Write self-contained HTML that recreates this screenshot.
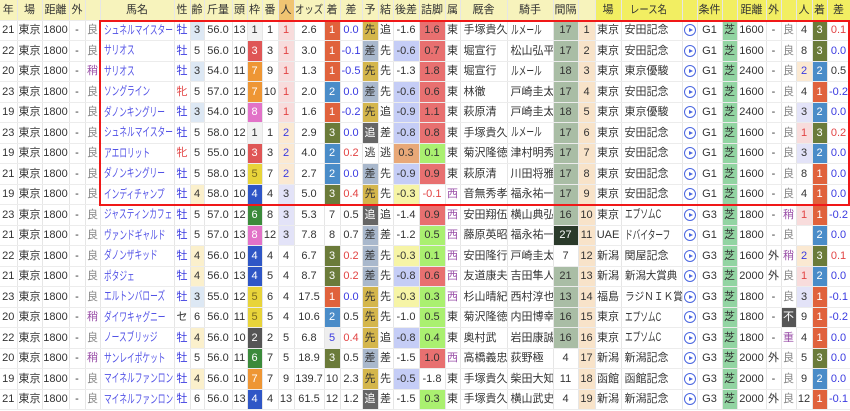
<!DOCTYPE html>
<html><head><meta charset="utf-8"><style>
body{margin:0;width:850px;height:411px;overflow:hidden;background:#fff;font-family:"Liberation Sans","Noto Sans CJK JP",sans-serif;font-size:11px;color:#333;position:relative}
table{border-collapse:collapse;table-layout:fixed;width:850px}
tr{height:20.5px}
tr.h{height:20px}
td,th{padding:0;text-align:center;white-space:nowrap;overflow:hidden;border-right:1px solid #e6e6e6;border-bottom:1px solid #ececec;line-height:16px}
th{font-weight:normal;background:#f7f3bc}
th.y{background:#f2ee62}th.o{background:#f0c472}
td.l{text-align:left;padding-left:3px}
.n{color:#5252e6;text-align:left;padding-left:3px}
.k{display:inline-block;font-size:12px;transform:scaleX(0.64);transform-origin:0 50%}
.bl{color:#3a3ae0}.rd{color:#e24444}.pu{color:#9a50a8}.gr{color:#888}
.w1{background:#f2f2f2}.w2{background:#555;color:#fff}.w3{background:#df5656;color:#fff}.w4{background:#2f56c6;color:#fff}.w5{background:#e8d43a;color:#7a6a20}.w6{background:#3b8a3b;color:#fff}.w7{background:#ee9634;color:#fff}.w8{background:#e272c8;color:#fff}
.f1{background:#e0623c;color:#fff}.f2{background:#4a8cc8;color:#fff}.f3{background:#6b7b3a;color:#fff}.f5{background:#eee;color:#3a3ae0}
.sen{background:#d4b64c}.sa{background:#a9b8cc}.oi{background:#666;color:#fff}
.ab{background:#c5cdf6}.ay{background:#f6f4a6}.ao{background:#e8a878}
.tr{background:#e87070}.tg{background:#aaf070}
.ik{background:#a9bda5}.ikd{background:#2a3a2a;color:#fff}
.no{background:#f8e3c9}.sh{background:#92d4a2}
.a3{background:#dde8f4}.a4{background:#fbf0cc}
.p1{background:#f8dcdc}.p2{background:#fbe9d2}.p3{background:#e3e3f8}
.fu{background:#555;color:#fff}
.pl{display:inline-block;width:10px;height:10px;border:1px solid #4a66e0;border-radius:50%;position:relative;vertical-align:middle}
.pl:after{content:"";position:absolute;left:4px;top:3px;border-left:4px solid #4a66e0;border-top:2px solid transparent;border-bottom:2px solid transparent}
#box{position:absolute;left:99px;top:20px;width:747px;height:182px;border:2px solid #f01818}
</style></head><body>
<table>
<colgroup><col style="width:17px"><col style="width:25px"><col style="width:27px"><col style="width:16px"><col style="width:15px"><col style="width:74px"><col style="width:16px"><col style="width:14px"><col style="width:28px"><col style="width:15px"><col style="width:15px"><col style="width:16px"><col style="width:16px"><col style="width:30px"><col style="width:16px"><col style="width:22px"><col style="width:16px"><col style="width:15px"><col style="width:26px"><col style="width:26px"><col style="width:15px"><col style="width:47px"><col style="width:46px"><col style="width:25px"><col style="width:17px"><col style="width:26px"><col style="width:61px"><col style="width:15px"><col style="width:25px"><col style="width:15px"><col style="width:29px"><col style="width:15px"><col style="width:15px"><col style="width:16px"><col style="width:15px"><col style="width:23px"></colgroup>
<tr class="h"><th>年</th><th>場</th><th>距離</th><th>外</th><th></th><th>馬名</th><th>性</th><th>齢</th><th>斤量</th><th>頭</th><th>枠</th><th>番</th><th class="o">人</th><th><span class="k" style="font-size:11px;transform:scaleX(0.85)">オッズ</span></th><th>着</th><th>差</th><th>予</th><th>結</th><th>後差</th><th>詰脚</th><th>属</th><th>厩舎</th><th>騎手</th><th>間隔</th><th></th><th class="y">場</th><th class="y"><span class="k" style="font-size:11px;transform:scaleX(0.85)">レース名</span></th><th class="y"></th><th class="y">条件</th><th class="y"></th><th class="y">距離</th><th class="y">外</th><th class="y"></th><th class="y">人</th><th class="y">着</th><th class="y">差</th></tr>
<tr><td>21</td><td>東京</td><td>1800</td><td>-</td><td class="gr">良</td><td class="n"><span class="k">シュネルマイスター</span></td><td class="bl">牡</td><td class="a3">3</td><td>56.0</td><td>13</td><td class="w1">1</td><td>1</td><td class="p1 rd">1</td><td>2.6</td><td class="f1">1</td><td class="bl">0.0</td><td class="sen">先</td><td>追</td><td>-1.6</td><td class="tr">1.6</td><td>東</td><td class="l">手塚貴久</td><td class="l"><span class="k">ルメール</span></td><td class="ik">17</td><td class="no">1</td><td>東京</td><td class="l">安田記念</td><td><span class="pl"></span></td><td>G1</td><td class="sh">芝</td><td>1600</td><td>-</td><td class="gr">良</td><td>4</td><td class="f3">3</td><td class="rd">0.1</td></tr>
<tr><td>22</td><td>東京</td><td>1800</td><td>-</td><td class="gr">良</td><td class="n"><span class="k">サリオス</span></td><td class="bl">牡</td><td>5</td><td>56.0</td><td>10</td><td class="w3">3</td><td>3</td><td class="p1 rd">1</td><td>3.0</td><td class="f1">1</td><td class="bl">-0.1</td><td class="sa">差</td><td>先</td><td class="ab">-0.6</td><td class="tr">0.7</td><td>東</td><td class="l">堀宣行</td><td class="l">松山弘平</td><td class="ik">17</td><td class="no">2</td><td>東京</td><td class="l">安田記念</td><td><span class="pl"></span></td><td>G1</td><td class="sh">芝</td><td>1600</td><td>-</td><td class="gr">良</td><td>8</td><td class="f3">3</td><td class="bl">0.0</td></tr>
<tr><td>20</td><td>東京</td><td>1800</td><td>-</td><td class="pu">稍</td><td class="n"><span class="k">サリオス</span></td><td class="bl">牡</td><td class="a3">3</td><td>54.0</td><td>11</td><td class="w7">7</td><td>9</td><td class="p1 rd">1</td><td>1.3</td><td class="f1">1</td><td class="bl">-0.5</td><td class="sen">先</td><td>先</td><td>-1.3</td><td class="tr">1.8</td><td>東</td><td class="l">堀宣行</td><td class="l"><span class="k">ルメール</span></td><td class="ik">18</td><td class="no">3</td><td>東京</td><td class="l">東京優駿</td><td><span class="pl"></span></td><td>G1</td><td class="sh">芝</td><td>2400</td><td>-</td><td class="gr">良</td><td class="p2 bl">2</td><td class="f2">2</td><td>0.5</td></tr>
<tr><td>23</td><td>東京</td><td>1800</td><td>-</td><td class="gr">良</td><td class="n"><span class="k">ソングライン</span></td><td class="rd">牝</td><td>5</td><td>57.0</td><td>12</td><td class="w7">7</td><td>10</td><td class="p1 rd">1</td><td>2.0</td><td class="f2">2</td><td class="bl">0.0</td><td class="sa">差</td><td>先</td><td class="ab">-0.6</td><td class="tr">0.6</td><td>東</td><td class="l">林徹</td><td class="l">戸崎圭太</td><td class="ik">17</td><td class="no">4</td><td>東京</td><td class="l">安田記念</td><td><span class="pl"></span></td><td>G1</td><td class="sh">芝</td><td>1600</td><td>-</td><td class="gr">良</td><td>4</td><td class="f1">1</td><td class="bl">-0.2</td></tr>
<tr><td>19</td><td>東京</td><td>1800</td><td>-</td><td class="gr">良</td><td class="n"><span class="k">ダノンキングリー</span></td><td class="bl">牡</td><td class="a3">3</td><td>54.0</td><td>10</td><td class="w8">8</td><td>9</td><td class="p1 rd">1</td><td>1.6</td><td class="f1">1</td><td class="bl">-0.2</td><td class="sen">先</td><td>追</td><td class="ab">-0.9</td><td class="tr">1.1</td><td>東</td><td class="l">萩原清</td><td class="l">戸崎圭太</td><td class="ik">18</td><td class="no">5</td><td>東京</td><td class="l">東京優駿</td><td><span class="pl"></span></td><td>G1</td><td class="sh">芝</td><td>2400</td><td>-</td><td class="gr">良</td><td class="p3">3</td><td class="f2">2</td><td class="bl">0.0</td></tr>
<tr><td>23</td><td>東京</td><td>1800</td><td>-</td><td class="gr">良</td><td class="n"><span class="k">シュネルマイスター</span></td><td class="bl">牡</td><td>5</td><td>58.0</td><td>12</td><td class="w1">1</td><td>1</td><td class="p2 bl">2</td><td>2.9</td><td class="f3">3</td><td class="bl">0.0</td><td class="oi">追</td><td>差</td><td class="ab">-0.8</td><td class="tr">0.8</td><td>東</td><td class="l">手塚貴久</td><td class="l"><span class="k">ルメール</span></td><td class="ik">17</td><td class="no">6</td><td>東京</td><td class="l">安田記念</td><td><span class="pl"></span></td><td>G1</td><td class="sh">芝</td><td>1600</td><td>-</td><td class="gr">良</td><td class="p1 rd">1</td><td class="f3">3</td><td class="rd">0.2</td></tr>
<tr><td>19</td><td>東京</td><td>1800</td><td>-</td><td class="gr">良</td><td class="n"><span class="k">アエロリット</span></td><td class="rd">牝</td><td>5</td><td>55.0</td><td>10</td><td class="w3">3</td><td>3</td><td class="p2 bl">2</td><td>4.0</td><td class="f2">2</td><td class="rd">0.2</td><td>逃</td><td>逃</td><td class="ao">0.3</td><td class="tg">0.1</td><td>東</td><td class="l">菊沢隆徳</td><td class="l">津村明秀</td><td class="ik">17</td><td class="no">7</td><td>東京</td><td class="l">安田記念</td><td><span class="pl"></span></td><td>G1</td><td class="sh">芝</td><td>1600</td><td>-</td><td class="gr">良</td><td class="p3">3</td><td class="f2">2</td><td class="bl">0.0</td></tr>
<tr><td>21</td><td>東京</td><td>1800</td><td>-</td><td class="gr">良</td><td class="n"><span class="k">ダノンキングリー</span></td><td class="bl">牡</td><td>5</td><td>58.0</td><td>13</td><td class="w5">5</td><td>7</td><td class="p2 bl">2</td><td>2.7</td><td class="f2">2</td><td class="bl">0.0</td><td class="sa">差</td><td>先</td><td class="ab">-0.9</td><td class="tr">0.9</td><td>東</td><td class="l">萩原清</td><td class="l">川田将雅</td><td class="ik">17</td><td class="no">8</td><td>東京</td><td class="l">安田記念</td><td><span class="pl"></span></td><td>G1</td><td class="sh">芝</td><td>1600</td><td>-</td><td class="gr">良</td><td>8</td><td class="f1">1</td><td class="bl">0.0</td></tr>
<tr><td>19</td><td>東京</td><td>1800</td><td>-</td><td class="gr">良</td><td class="n"><span class="k">インディチャンプ</span></td><td class="bl">牡</td><td class="a4">4</td><td>58.0</td><td>10</td><td class="w4">4</td><td>4</td><td class="p3">3</td><td>5.0</td><td class="f3">3</td><td class="rd">0.4</td><td class="sen">先</td><td>先</td><td class="ay">-0.3</td><td class="rd">-0.1</td><td class="pu">西</td><td class="l">音無秀孝</td><td class="l">福永祐一</td><td class="ik">17</td><td class="no">9</td><td>東京</td><td class="l">安田記念</td><td><span class="pl"></span></td><td>G1</td><td class="sh">芝</td><td>1600</td><td>-</td><td class="gr">良</td><td>4</td><td class="f1">1</td><td class="bl">0.0</td></tr>
<tr><td>23</td><td>東京</td><td>1800</td><td>-</td><td class="gr">良</td><td class="n"><span class="k">ジャスティンカフェ</span></td><td class="bl">牡</td><td>5</td><td>57.0</td><td>12</td><td class="w6">6</td><td>8</td><td class="p3">3</td><td>5.3</td><td>7</td><td>0.5</td><td class="oi">追</td><td>追</td><td>-1.4</td><td class="tr">0.9</td><td class="pu">西</td><td class="l">安田翔伍</td><td class="l">横山典弘</td><td class="ik">16</td><td class="no">10</td><td>東京</td><td class="l"><span class="k">エプソムC</span></td><td><span class="pl"></span></td><td>G3</td><td class="sh">芝</td><td>1800</td><td>-</td><td class="pu">稍</td><td class="p1 rd">1</td><td class="f1">1</td><td class="bl">-0.2</td></tr>
<tr><td>21</td><td>東京</td><td>1800</td><td>-</td><td class="gr">良</td><td class="n"><span class="k">ヴァンドギャルド</span></td><td class="bl">牡</td><td>5</td><td>57.0</td><td>13</td><td class="w8">8</td><td>12</td><td class="p3">3</td><td>7.8</td><td>8</td><td>0.7</td><td class="sa">差</td><td>差</td><td>-1.2</td><td class="tg">0.5</td><td class="pu">西</td><td class="l">藤原英昭</td><td class="l">福永祐一</td><td class="ikd">27</td><td class="no">11</td><td>UAE</td><td class="l"><span class="k">ドバイターフ</span></td><td><span class="pl"></span></td><td>G1</td><td class="sh">芝</td><td>1800</td><td>-</td><td class="gr">良</td><td></td><td class="f2">2</td><td class="bl">0.0</td></tr>
<tr><td>22</td><td>東京</td><td>1800</td><td>-</td><td class="gr">良</td><td class="n"><span class="k">ダノンザキッド</span></td><td class="bl">牡</td><td class="a4">4</td><td>56.0</td><td>10</td><td class="w4">4</td><td>4</td><td>4</td><td>6.7</td><td class="f3">3</td><td class="rd">0.2</td><td class="sa">差</td><td>先</td><td class="ay">-0.3</td><td class="tg">0.1</td><td class="pu">西</td><td class="l">安田隆行</td><td class="l">戸崎圭太</td><td>7</td><td class="no">12</td><td>新潟</td><td class="l">関屋記念</td><td><span class="pl"></span></td><td>G3</td><td class="sh">芝</td><td>1600</td><td>外</td><td class="pu">稍</td><td class="p2 bl">2</td><td class="f3">3</td><td class="rd">0.1</td></tr>
<tr><td>21</td><td>東京</td><td>1800</td><td>-</td><td class="gr">良</td><td class="n"><span class="k">ポタジェ</span></td><td class="bl">牡</td><td class="a4">4</td><td>56.0</td><td>13</td><td class="w4">4</td><td>5</td><td>4</td><td>8.7</td><td class="f3">3</td><td class="rd">0.2</td><td class="sa">差</td><td>先</td><td class="ab">-0.8</td><td class="tr">0.6</td><td class="pu">西</td><td class="l">友道康夫</td><td class="l">吉田隼人</td><td class="ik">21</td><td class="no">13</td><td>新潟</td><td class="l"><span class="k" style="font-size:11px;transform:scaleX(0.95)">新潟大賞典</span></td><td><span class="pl"></span></td><td>G3</td><td class="sh">芝</td><td>2000</td><td>外</td><td class="gr">良</td><td class="p1 rd">1</td><td class="f2">2</td><td class="bl">0.0</td></tr>
<tr><td>23</td><td>東京</td><td>1800</td><td>-</td><td class="gr">良</td><td class="n"><span class="k">エルトンバローズ</span></td><td class="bl">牡</td><td class="a3">3</td><td>55.0</td><td>12</td><td class="w5">5</td><td>6</td><td>4</td><td>17.5</td><td class="f1">1</td><td class="bl">0.0</td><td class="sen">先</td><td>先</td><td class="ay">-0.3</td><td class="tg">0.3</td><td class="pu">西</td><td class="l">杉山晴紀</td><td class="l">西村淳也</td><td class="ik">13</td><td class="no">14</td><td>福島</td><td class="l"><span class="k" style="font-size:11px;transform:scaleX(0.88)">ラジＮＩＫ賞</span></td><td><span class="pl"></span></td><td>G3</td><td class="sh">芝</td><td>1800</td><td>-</td><td class="gr">良</td><td class="p3">3</td><td class="f1">1</td><td class="bl">-0.1</td></tr>
<tr><td>20</td><td>東京</td><td>1800</td><td>-</td><td class="pu">稍</td><td class="n"><span class="k">ダイワキャグニー</span></td><td>セ</td><td>6</td><td>56.0</td><td>11</td><td class="w5">5</td><td>5</td><td>4</td><td>10.6</td><td class="f2">2</td><td>0.5</td><td class="sen">先</td><td>先</td><td>-1.0</td><td class="tg">0.5</td><td>東</td><td class="l">菊沢隆徳</td><td class="l">内田博幸</td><td class="ik">16</td><td class="no">15</td><td>東京</td><td class="l"><span class="k">エプソムC</span></td><td><span class="pl"></span></td><td>G3</td><td class="sh">芝</td><td>1800</td><td>-</td><td class="fu">不</td><td>9</td><td class="f1">1</td><td class="bl">-0.2</td></tr>
<tr><td>22</td><td>東京</td><td>1800</td><td>-</td><td class="gr">良</td><td class="n"><span class="k">ノースブリッジ</span></td><td class="bl">牡</td><td class="a4">4</td><td>56.0</td><td>10</td><td class="w2">2</td><td>2</td><td>5</td><td>6.8</td><td class="f5">5</td><td class="rd">0.4</td><td class="sen">先</td><td>追</td><td class="ab">-0.8</td><td class="tg">0.4</td><td>東</td><td class="l">奥村武</td><td class="l">岩田康誠</td><td class="ik">16</td><td class="no">16</td><td>東京</td><td class="l"><span class="k">エプソムC</span></td><td><span class="pl"></span></td><td>G3</td><td class="sh">芝</td><td>1800</td><td>-</td><td class="pu">重</td><td>4</td><td class="f1">1</td><td class="bl">0.0</td></tr>
<tr><td>20</td><td>東京</td><td>1800</td><td>-</td><td class="pu">稍</td><td class="n"><span class="k">サンレイポケット</span></td><td class="bl">牡</td><td>5</td><td>56.0</td><td>11</td><td class="w6">6</td><td>7</td><td>5</td><td>18.9</td><td class="f3">3</td><td>0.5</td><td class="sa">差</td><td>差</td><td>-1.5</td><td class="tr">1.0</td><td class="pu">西</td><td class="l">高橋義忠</td><td class="l">荻野極</td><td>4</td><td class="no">17</td><td>新潟</td><td class="l">新潟記念</td><td><span class="pl"></span></td><td>G3</td><td class="sh">芝</td><td>2000</td><td>外</td><td class="gr">良</td><td>5</td><td class="f3">3</td><td class="bl">0.0</td></tr>
<tr><td>19</td><td>東京</td><td>1800</td><td>-</td><td class="gr">良</td><td class="n"><span class="k">マイネルファンロン</span></td><td class="bl">牡</td><td class="a4">4</td><td>56.0</td><td>10</td><td class="w7">7</td><td>7</td><td>9</td><td>139.7</td><td>10</td><td>2.3</td><td class="sen">先</td><td>先</td><td class="ab">-0.5</td><td>-1.8</td><td>東</td><td class="l">手塚貴久</td><td class="l">柴田大知</td><td>11</td><td class="no">18</td><td>函館</td><td class="l">函館記念</td><td><span class="pl"></span></td><td>G3</td><td class="sh">芝</td><td>2000</td><td>-</td><td class="gr">良</td><td>9</td><td class="f2">2</td><td class="bl">0.0</td></tr>
<tr><td>21</td><td>東京</td><td>1800</td><td>-</td><td class="gr">良</td><td class="n"><span class="k">マイネルファンロン</span></td><td class="bl">牡</td><td>6</td><td>56.0</td><td>13</td><td class="w4">4</td><td>4</td><td>13</td><td>61.5</td><td>12</td><td>1.2</td><td class="oi">追</td><td>差</td><td>-1.5</td><td class="tg">0.3</td><td>東</td><td class="l">手塚貴久</td><td class="l">横山武史</td><td>4</td><td class="no">19</td><td>新潟</td><td class="l">新潟記念</td><td><span class="pl"></span></td><td>G3</td><td class="sh">芝</td><td>2000</td><td>外</td><td class="gr">良</td><td>12</td><td class="f1">1</td><td class="bl">-0.1</td></tr>
</table>
<div id="box"></div>
</body></html>
